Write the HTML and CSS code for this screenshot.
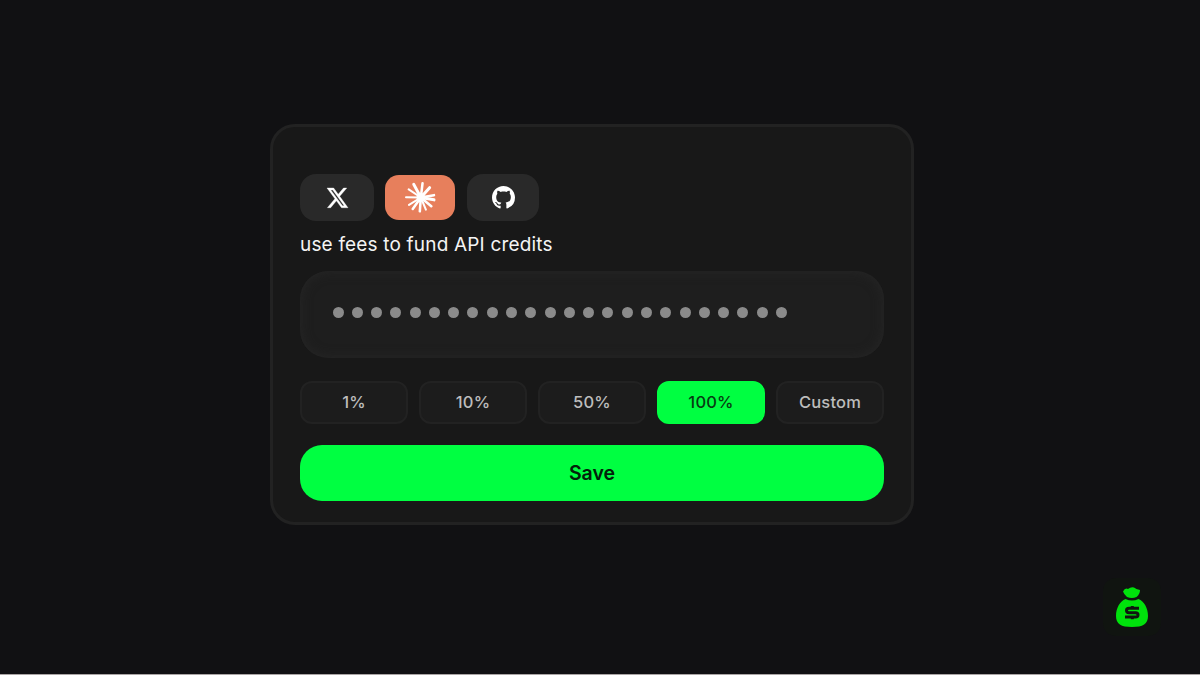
FILE: index.html
```html
<!DOCTYPE html>
<html lang="en">
  <head>
    <meta charset="utf-8">
    <title>Fund API credits</title>
    <link rel="stylesheet" href="styles.css">
  </head>
  <body>
    <form class="card">
      <div class="tabs">
        <button type="button" class="tab" aria-label="X">
          <svg class="icon-x" viewBox="0 0 24 22" preserveAspectRatio="none"><path fill="#fff" stroke="#fff" stroke-width=".4" d="M18.9 0h3.68l-8.04 9.19L24 21.7h-7.41l-5.8-7.59-6.64 7.59H.47l8.6-9.83L0 0h7.59l5.24 6.93zm-1.29 19.5h2.04L6.49 2.09H4.3z"/></svg>
        </button>
        <button type="button" class="tab tab-active" aria-label="Claude">
          <svg class="icon-burst" viewBox="75 52 92 92">
            <g stroke="#fff" stroke-linecap="round" fill="none">
              <path stroke-width="9" d="M122 98L101 59M122 98L148 69M122 98L161 105"/>
              <path stroke-width="7.500" d="M122 98L127 56M122 98L161 91M122 98L153 124M122 98L119 139M122 98L98 132"/>
              <path stroke-width="6" d="M122 98L86 74M122 98L78 97M122 98L87 120M122 98L137 134"/>
            </g>
            <circle cx="122" cy="98" r="13" fill="#fff"/>
          </svg>
        </button>
        <button type="button" class="tab" aria-label="GitHub">
          <svg class="icon-github" viewBox="0 0 16 16"><path fill="#fff" d="M8 0C3.58 0 0 3.58 0 8c0 3.54 2.29 6.53 5.47 7.59.4.07.55-.17.55-.38 0-.19-.01-.82-.01-1.49-2.01.37-2.53-.49-2.69-.94-.09-.23-.48-.94-.82-1.13-.28-.15-.68-.52-.01-.53.63-.01 1.08.58 1.23.82.72 1.21 1.87.87 2.33.66.07-.52.28-.87.51-1.07-1.78-.2-3.64-.89-3.64-3.95 0-.87.31-1.59.82-2.15-.08-.2-.36-1.02.08-2.12 0 0 .67-.21 2.2.82.64-.18 1.32-.27 2-.27s1.36.09 2 .27c1.53-1.04 2.2-.82 2.2-.82.44 1.1.16 1.92.08 2.12.51.56.82 1.27.82 2.15 0 3.07-1.87 3.75-3.65 3.95.29.25.54.73.54 1.48 0 1.07-.01 1.93-.01 2.2 0 .21.15.46.55.38A8.01 8.01 0 0 0 16 8c0-4.42-3.58-8-8-8z"/></svg>
        </button>
      </div>
      <div class="caption">use fees to fund API credits</div>
      <div class="key-field">
        <i></i><i></i><i></i><i></i><i></i><i></i><i></i><i></i>
        <i></i><i></i><i></i><i></i><i></i><i></i><i></i><i></i>
        <i></i><i></i><i></i><i></i><i></i><i></i><i></i><i></i>
      </div>
      <div class="amounts">
        <button type="button" class="amount">1%</button>
        <button type="button" class="amount">10%</button>
        <button type="button" class="amount">50%</button>
        <button type="button" class="amount amount-active">100%</button>
        <button type="button" class="amount">Custom</button>
      </div>
      <button type="button" class="save">Save</button>
    </form>
    <div class="badge">
      <svg viewBox="0 0 34 42">
        <path fill="#00e20c" d="M8 5.500Q10 1.500 13 3Q16 .5 19 1.500Q21 3 25 4Q25 8 21.500 11Q17 13 12 11Q9 8.500 8 5.500Z"/>
        <path fill="#00e20c" d="M10.500 13Q17 16 23.500 13C29 15 33 22 33 30C33 38 28 41 17 41S1 38 1 30C1 22 5 15 10.500 13Z"/>
        <path stroke="#101510" stroke-width="3" fill="none" d="M24 22.300H14Q11.500 22.300 11.500 24.500T14 26.700H20.500Q23 26.700 23 28.900T20.500 31H10"/>
        <path stroke="#101510" stroke-width="3" d="M17.300 20V22.500M17.300 31V33.300"/>
      </svg>
    </div>
  </body>
</html>
```
FILE: styles.css
```css
* {
  box-sizing: border-box;
}

body {
  display: flex;
  justify-content: center;
  height: 675px;
  margin: 0;
  padding: 124px 16px 0 0;
  overflow: hidden;
  background: #111113;
  border-bottom: 1px solid #aaa5a5;
  font-family: Inter, "Liberation Sans", sans-serif;
}

button {
  padding: 0;
  border: 0;
  font-family: inherit;
}

.card {
  width: 644px;
  height: 401px;
  padding: 47px 27px 0;
  background: #181818;
  border: 3px solid #222;
  border-radius: 25px;
}

.tabs {
  display: flex;
  align-items: center;
  gap: 11px;
  height: 47px;
}

.tab {
  display: flex;
  align-items: center;
  justify-content: center;
  width: 74px;
  height: 47px;
  background: #292929;
  border-radius: 16px;
}

.tab-active {
  width: 70px;
  height: 45px;
  background: #e77f5c;
  border-radius: 14px;
}

.tab:last-child {
  width: 72px;
  margin-left: 1px;
}

.icon-x {
  width: 21px;
  height: 20px;
  overflow: visible;
}

.icon-burst {
  width: 31px;
  height: 31px;
}

.icon-github {
  width: 23px;
  height: 23px;
}

.caption {
  height: 50px;
  padding-top: 10px;
  color: #f4f4f4;
  font-size: 19px;
  line-height: 28px;
  letter-spacing: 0.18px;
  white-space: nowrap;
}

.key-field {
  display: flex;
  align-items: center;
  gap: 8.290px;
  height: 87px;
  padding: 0 0 4px 32.500px;
  background: #1e1e1e;
  border-radius: 28px;
  box-shadow: inset 0 0 12px #272727;
}

.key-field i {
  width: 11px;
  height: 11px;
  background: #8b8b8b;
  border-radius: 50%;
}

.amounts {
  display: grid;
  grid-template-columns: repeat(5, 1fr);
  gap: 11px;
  margin-top: 23px;
}

.amount {
  height: 43px;
  padding-bottom: 1px;
  background: #1c1c1c;
  border: 2px solid #222;
  border-radius: 12px;
  color: #bdbdbd;
  font-size: 16.500px;
  font-weight: 500;
  letter-spacing: 0.2px;
}

.amount-active {
  background: #00ff41;
  border-color: #00ff41;
  color: #073b12;
}

.save {
  width: 100%;
  height: 56px;
  margin-top: 21px;
  background: #00ff41;
  border-radius: 22px;
  color: #03200a;
  font-size: 19.500px;
  font-weight: 600;
}

.badge {
  position: absolute;
  right: 39px;
  bottom: 39px;
  display: flex;
  align-items: center;
  justify-content: center;
  width: 58px;
  height: 58px;
  background: #101410;
  border-radius: 13px;
}

.badge svg {
  width: 34px;
  height: 42px;
}
```
